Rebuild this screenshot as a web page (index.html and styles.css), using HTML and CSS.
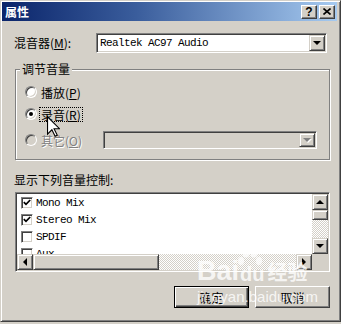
FILE: index.html
```html
<!DOCTYPE html>
<html lang="zh-CN">
<head>
    <meta charset="UTF-8">
    <title>属性</title>
    <link rel="stylesheet" href="styles.css">
</head>
<body>
    <div class="window">
        <div class="title-bar">
            <span class="title-text">属性</span>
            <div class="title-buttons">
                <span class="cap-btn help">?</span>
                <span class="cap-btn">
                    <svg width="8" height="7" viewBox="0 0 8 7"><path d="M0.5 0.5 L7.5 6.5 M7.5 0.5 L0.5 6.5" stroke="#000" stroke-width="1.6"/></svg>
                </span>
            </div>
        </div>

        <div class="dialog">
            <div class="mixer-row">
                <span class="label">混音器(<u>M</u>):</span>
                <div class="combo">
                    <span class="combo-text">Realtek AC97 Audio</span>
                    <span class="drop-btn"><i class="arrow down"></i></span>
                </div>
            </div>

            <fieldset class="group">
                <legend>调节音量</legend>
                <div class="radio-row">
                    <span class="radio"></span>
                    <span class="radio-label">播放(<u>P</u>)</span>
                </div>
                <div class="radio-row">
                    <span class="radio checked"></span>
                    <span class="radio-label focus">录音(<u>R</u>)</span>
                </div>
                <div class="radio-row other disabled">
                    <span class="radio"></span>
                    <span class="radio-label">其它(<u>O</u>)</span>
                    <div class="combo small">
                        <span class="combo-text"></span>
                        <span class="drop-btn"><i class="arrow down"></i></span>
                    </div>
                </div>
            </fieldset>

            <div class="list-label">显示下列音量控制:</div>
            <div class="listbox">
                <div class="list-items">
                    <div class="item"><span class="check on"><svg width="8" height="7" viewBox="0 0 8 7"><path d="M0.8 3.2 L3 5.4 L7.2 1" fill="none" stroke="#000" stroke-width="1.7"/></svg></span>Mono Mix</div>
                    <div class="item"><span class="check on"><svg width="8" height="7" viewBox="0 0 8 7"><path d="M0.8 3.2 L3 5.4 L7.2 1" fill="none" stroke="#000" stroke-width="1.7"/></svg></span>Stereo Mix</div>
                    <div class="item"><span class="check"></span>SPDIF</div>
                    <div class="item"><span class="check"></span>Aux</div>
                </div>
                <div class="vscroll">
                    <span class="sb-btn"><i class="arrow up"></i></span>
                    <span class="sb-thumb v"></span>
                    <span class="sb-track"></span>
                    <span class="sb-btn"><i class="arrow down"></i></span>
                </div>
                <div class="hscroll">
                    <span class="sb-btn"><i class="arrow left"></i></span>
                    <span class="sb-thumb h"></span>
                    <span class="sb-track"></span>
                    <span class="sb-btn"><i class="arrow right"></i></span>
                </div>
                <div class="corner"></div>
            </div>

            <div class="buttons">
                <button class="btn default">确定</button>
                <button class="btn">取消</button>
            </div>
        </div>

        <!-- watermark over the bottom of the dialog -->
        <div class="watermark">
            <div class="wm-logo">
                <span>Bai</span>
                <span class="wm-du">du</span>
                <span class="wm-cn">经验</span>
            </div>
            <div class="wm-url">jingyan.baidu.com</div>
            <svg class="wm-paw" width="30" height="22" viewBox="0 0 30 22">
                <ellipse cx="6" cy="14" rx="3" ry="4" fill="rgba(255,255,255,0.75)"/>
                <ellipse cx="11" cy="6" rx="3.5" ry="4.5" fill="rgba(255,255,255,0.75)"/>
                <ellipse cx="19" cy="6" rx="3.5" ry="4.5" fill="rgba(255,255,255,0.75)"/>
                <ellipse cx="24" cy="14" rx="3" ry="4" fill="rgba(255,255,255,0.75)"/>
            </svg>
        </div>

        <svg class="cursor" width="13" height="21" viewBox="0 0 12 19">
            <path d="M0.5 0.5 V16.5 L4.5 12.5 L7.5 18.5 L9.5 17.5 L6.5 11.5 H11.5 Z" fill="#fff" stroke="#000" stroke-width="1"/>
        </svg>
    </div>
</body>
</html>
```

FILE: styles.css
```css
* {
    box-sizing: border-box;
}

body {
    margin: 0;
    background: #d4d0c8;
    font-family: "Noto Sans CJK SC", "Noto Sans", sans-serif;
    font-size: 12px;
    color: #000;
}

u {
    text-decoration: underline;
}

.window {
    position: relative;
    width: 341px;
    height: 322px;
    border: 1px solid;
    border-color: #d4d0c8 #404040 #404040 #d4d0c8;
    box-shadow: inset 1px 1px #fff, inset -1px -1px #808080;
    padding: 1px 3px 0 1px;
    background: #d4d0c8;
    overflow: hidden;
}

.title-bar {
    height: 19px;
    display: flex;
    align-items: center;
    justify-content: space-between;
    padding: 0 2px 0 3px;
    background: linear-gradient(to right, #0a246a 0%, #3a5d9c 40%, #a6caf0 100%);
}

.title-text {
    color: #fff;
    font-weight: bold;
    font-size: 12px;
    line-height: 19px;
}

.title-buttons {
    display: flex;
    gap: 2px;
}

.cap-btn {
    width: 16px;
    height: 14px;
    display: flex;
    align-items: center;
    justify-content: center;
    background: #d4d0c8;
    border: 1px solid;
    border-color: #fff #404040 #404040 #fff;
    box-shadow: inset -1px -1px #808080;
}

.cap-btn.help {
    font-family: "Liberation Sans", sans-serif;
    font-weight: bold;
    font-size: 12px;
    line-height: 12px;
}

.dialog {
    padding: 12px 7px 0 13px;
}

.mixer-row {
    display: flex;
    align-items: center;
    height: 20px;
}

.label {
    width: 82px;
    margin-left: -1px;
    line-height: 14px;
}

.combo {
    width: 231px;
    height: 20px;
    display: flex;
    align-items: center;
    padding: 1px;
    background: #fff;
    border: 1px solid;
    border-color: #808080 #fff #fff #808080;
    box-shadow: inset 1px 1px #404040, inset -1px -1px #d4d0c8;
}

.combo-text {
    flex: 1;
    padding-left: 2px;
    font-family: "Liberation Mono", monospace;
    font-size: 11px;
    letter-spacing: -0.6px;
    white-space: nowrap;
}

.drop-btn,
.sb-btn {
    width: 16px;
    height: 16px;
    flex: none;
    display: flex;
    align-items: center;
    justify-content: center;
    background: #d4d0c8;
    border: 1px solid;
    border-color: #d4d0c8 #404040 #404040 #d4d0c8;
    box-shadow: inset 1px 1px #fff, inset -1px -1px #808080;
}

.arrow {
    width: 0;
    height: 0;
    border: 4px solid transparent;
}

.arrow.down {
    border-top-color: #000;
    border-bottom-width: 0;
}

.arrow.up {
    border-bottom-color: #000;
    border-top-width: 0;
}

.arrow.left {
    border-right-color: #000;
    border-left-width: 0;
}

.arrow.right {
    border-left-color: #000;
    border-right-width: 0;
}

.group {
    margin: 9px 0 0 0;
    padding: 8px 12px 10px 9px;
    min-width: 0;
    border: 1px solid #808080;
    box-shadow: inset 1px 1px #fff, 1px 1px #fff;
}

.group legend {
    margin-left: -5px;
    padding: 0 2px;
    line-height: 14px;
    background: #d4d0c8;
}

.radio-row {
    display: flex;
    align-items: center;
    height: 16px;
}

.radio-row + .radio-row {
    margin-top: 6px;
}

.radio-row.other {
    height: 18px;
    margin-top: 9px;
}

.radio {
    position: relative;
    width: 12px;
    height: 12px;
    flex: none;
    border-radius: 50%;
    background: #fff;
    border: 1px solid;
    border-color: #808080 #fff #fff #808080;
    box-shadow: inset 1px 1px #404040, inset -1px -1px #d4d0c8;
}

.radio.checked::after {
    content: '';
    position: absolute;
    top: 3px;
    left: 3px;
    width: 4px;
    height: 4px;
    border-radius: 50%;
    background: #000;
}

.radio-label {
    margin-left: 2px;
    padding: 0 1px;
    line-height: 13px;
    border: 1px dotted transparent;
}

.radio-label.focus {
    border-color: #000;
}

.disabled .radio {
    background: #d4d0c8;
}

.disabled .radio-label {
    color: #808080;
    text-shadow: 1px 1px #fff;
}

.combo.small {
    width: 214px;
    height: 18px;
    margin-left: auto;
    background: #d4d0c8;
}

.combo.small .drop-btn {
    height: 14px;
}

.disabled .arrow.down {
    border-top-color: #808080;
    filter: drop-shadow(1px 1px 0 #fff);
}

.list-label {
    margin-top: 13px;
    margin-left: -1px;
    line-height: 14px;
}

.listbox {
    margin-top: 5px;
    width: 315px;
    height: 80px;
    padding: 1px;
    display: grid;
    grid-template-columns: 1fr 16px;
    grid-template-rows: 60px 16px;
    background: #fff;
    border: 1px solid;
    border-color: #808080 #fff #fff #808080;
    box-shadow: inset 1px 1px #404040, inset -1px -1px #d4d0c8;
}

.list-items {
    overflow: hidden;
    background: #fff;
}

.item {
    height: 17px;
    display: flex;
    align-items: center;
    padding-left: 4px;
    font-family: "Liberation Mono", monospace;
    font-size: 11px;
    letter-spacing: -0.6px;
    white-space: nowrap;
}

.check {
    width: 12px;
    height: 12px;
    flex: none;
    margin-right: 3px;
    display: flex;
    align-items: center;
    justify-content: center;
    background: #fff;
    border: 1px solid;
    border-color: #808080 #fff #fff #808080;
    box-shadow: inset 1px 1px #404040, inset -1px -1px #d4d0c8;
}

.vscroll {
    display: flex;
    flex-direction: column;
}

.hscroll {
    display: flex;
}

.sb-track {
    flex: 1;
    background: repeating-conic-gradient(#d4d0c8 0 25%, #fff 0 50%) 0 0 / 2px 2px;
}

.sb-thumb {
    flex: none;
    background: #d4d0c8;
    border: 1px solid;
    border-color: #d4d0c8 #404040 #404040 #d4d0c8;
    box-shadow: inset 1px 1px #fff, inset -1px -1px #808080;
}

.sb-thumb.v {
    height: 10px;
}

.sb-thumb.h {
    width: 126px;
}

.corner {
    background: #d4d0c8;
}

.buttons {
    display: flex;
    justify-content: flex-end;
    gap: 6px;
    margin-top: 14px;
}

.btn {
    width: 75px;
    height: 22px;
    padding: 0;
    font-family: "Noto Sans CJK SC", sans-serif;
    font-size: 12px;
    color: #000;
    background: #d4d0c8;
    border: 1px solid;
    border-color: #fff #404040 #404040 #fff;
    box-shadow: inset -1px -1px #808080;
}

.btn.default {
    border-color: #000;
    box-shadow: inset 1px 1px #fff, inset -1px -1px #404040, inset -2px -2px #808080;
}

.watermark {
    position: absolute;
    left: 196px;
    top: 246px;
    width: 120px;
    color: rgba(255, 255, 255, 0.8);
    pointer-events: none;
}

.wm-logo {
    display: flex;
    align-items: flex-end;
    height: 38px;
    font-family: "Liberation Sans", sans-serif;
    font-weight: bold;
    font-size: 27px;
    line-height: 27px;
}

.wm-du {
    margin-left: 1px;
    font-size: 20px;
    line-height: 22px;
}

.wm-cn {
    margin-left: 3px;
    font-family: "Noto Sans CJK SC", sans-serif;
    font-size: 20px;
    line-height: 26px;
}

.wm-url {
    margin-top: 4px;
    font-family: "Liberation Sans", sans-serif;
    font-size: 15px;
    line-height: 16px;
}

.wm-paw {
    position: absolute;
    left: 38px;
    top: 0;
}

.cursor {
    position: absolute;
    left: 46px;
    top: 115px;
}
```
